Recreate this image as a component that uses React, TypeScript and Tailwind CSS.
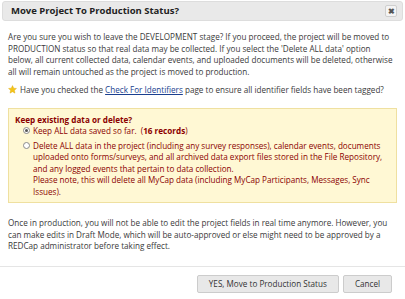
import React from 'react';

const font = { fontFamily: '"Open Sans", "Liberation Sans", sans-serif' };

const Radio = ({ checked }: { checked?: boolean }) => (
  <span className="mt-[2px] mr-[3px] inline-flex h-[7px] w-[7px] shrink-0 items-center justify-center rounded-full border border-[#8a8a8a] bg-white">
    {checked && <span className="h-[3px] w-[3px] rounded-full bg-[#555]"></span>}
  </span>
);

const Star = () => (
  <svg width="9" height="9" viewBox="0 0 24 24" className="mr-[3px] shrink-0">
    <path
      d="M12 1.5l3.2 6.9 7.4.8-5.5 5.1 1.5 7.4L12 18l-6.6 3.7 1.5-7.4L1.4 9.2l7.4-.8z"
      fill="#f5c518"
      stroke="#d9a400"
      strokeWidth="1"
    />
  </svg>
);

export default function App() {
  return (
    <div className="h-[299px] w-[405px] overflow-hidden bg-white text-[8.15px] leading-[11.5px] text-[#3a3a3a]" style={font}>
      {/* title bar */}
      <div className="mx-[2px] mt-[1px] flex h-[20px] items-center justify-between rounded-[3px] border border-[#dddddd] bg-[#e9e9e9] pl-[8px] pr-[5px]">
        <span className="text-[9.5px] font-bold text-[#222]">Move Project To Production Status?</span>
        <button className="flex h-[12px] w-[12px] items-center justify-center rounded-[2px] border border-[#cfcfcf] bg-[#f4f4f4] text-[8px] font-bold leading-none text-[#555]">
          ✖
        </button>
      </div>

      <div className="px-[8px] pt-[10px]">
        <p>
          Are you sure you wish to leave the DEVELOPMENT stage? If you proceed, the project will be moved to
          PRODUCTION status so that real data may be collected. If you select the 'Delete ALL data' option
          below, all current collected data, calendar events, and uploaded documents will be deleted, otherwise
          all will remain untouched as the project is moved to production.
        </p>

        <div className="mt-[7px] flex items-center">
          <Star />
          <span>
            Have you checked the <a className="text-[#1a3f8f] underline">Check For Identifiers</a> page to ensure
            all identifier fields have been tagged?
          </span>
        </div>

        <div className="mt-[12px] border border-[#efe0a0] bg-[#fff8d4] px-[6px] pb-[5px] pt-[5px] text-[#8b0000]">
          <div className="font-bold">Keep existing data or delete?</div>
          <div className="flex pl-[8px]">
            <Radio checked />
            <span>
              Keep ALL data saved so far.&nbsp; (<b>16 records</b>)
            </span>
          </div>
          <div className="mt-[3px] flex pl-[8px]">
            <Radio />
            <span>
              Delete ALL data in the project (including any survey responses), calendar events, documents uploaded
              onto forms/surveys, and all archived data export files stored in the File Repository, and any logged
              events that pertain to data collection.
              <br />
              Please note, this will delete all MyCap data (including MyCap Participants, Messages, Sync Issues).
            </span>
          </div>
        </div>

        <p className="mt-[14px]">
          Once in production, you will not be able to edit the project fields in real time anymore. However, you
          can make edits in Draft Mode, which will be auto-approved or else might need to be approved by a
          REDCap administrator before taking effect.
        </p>
      </div>

      <div className="mt-[14px] flex justify-end gap-[4px] border-t border-[#e5e5e5] pr-[13px] pt-[8px]">
        <button className="h-[18px] rounded-[2px] border border-[#cccccc] bg-[#e8e8e8] px-[11px] text-[8.15px] text-[#333]">
          YES, Move to Production Status
        </button>
        <button className="h-[18px] rounded-[2px] border border-[#cccccc] bg-[#e8e8e8] px-[11px] text-[8.15px] text-[#333]">
          Cancel
        </button>
      </div>
    </div>
  );
}
